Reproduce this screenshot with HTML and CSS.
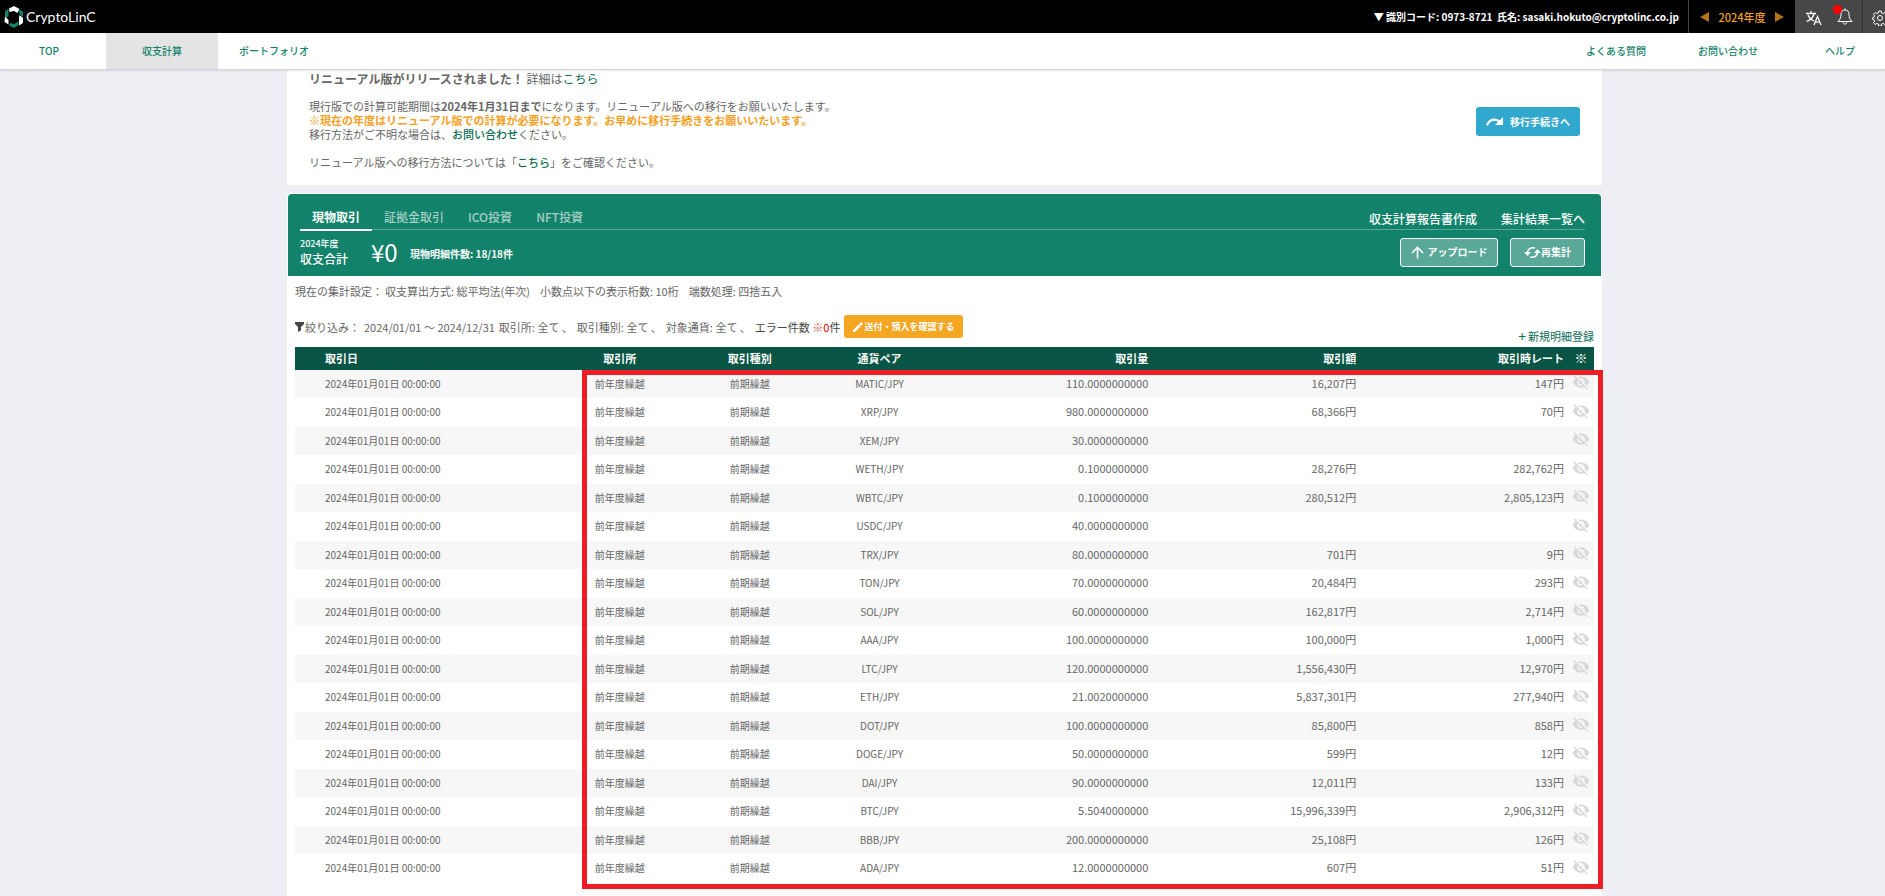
FILE: index.html
```html
<!DOCTYPE html>
<html lang="ja">
<head>
  <meta charset="UTF-8">
  <title>CryptoLinC 収支計算</title>
  <meta name="viewport" content="width=device-width, initial-scale=1">
  <link rel="stylesheet" href="styles.css">
</head>
<body>
  <svg class="defs" width="0" height="0">
    <symbol id="eye-off" viewBox="0 0 24 24"><path d="M12 7c2.76 0 5 2.24 5 5 0 .65-.13 1.26-.36 1.83l2.92 2.92c1.51-1.26 2.7-2.89 3.43-4.75-1.73-4.39-6-7.5-11-7.5-1.4 0-2.74.25-3.98.7l2.16 2.16C10.74 7.13 11.35 7 12 7zM2 4.27l2.28 2.28.46.46C3.08 8.3 1.78 10.02 1 12c1.73 4.39 6 7.5 11 7.5 1.55 0 3.03-.3 4.38-.84l.42.42L19.73 22 21 20.73 3.27 3 2 4.27zM7.53 9.8l1.55 1.55c-.05.21-.08.43-.08.65 0 1.66 1.34 3 3 3 .22 0 .44-.03.65-.08l1.55 1.55c-.67.33-1.41.53-2.2.53-2.76 0-5-2.24-5-5 0-.79.2-1.53.53-2.2zm4.31-.78l3.15 3.15.02-.16c0-1.66-1.34-3-3-3l-.17.01z"/></symbol>
  </svg>

  <header class="topbar">
    <a class="logo" href="#">
      <svg width="20" height="22" viewBox="0 0 20 22">
        <path fill="#fff" d="M5 2.500L10 0l5.500 3-2 4L10 5 5.500 6z"/>
        <path fill="#12836a" d="M4.500 3v7L1 13V5z"/>
        <path fill="#fff" d="M1 10.500l3.500 3.500v4.500L.5 16z"/>
        <path fill="#12836a" d="M6 17l4 1 4.500-2.500V19L10 22l-5-2.500z"/>
        <path fill="#fff" d="M15.500 9L19 12v5l-4 2.500V12z"/>
        <path fill="#12836a" d="M14.500 3.500L19 5.500V11l-3.500-3z"/>
      </svg>
      <span>CryptoLinC</span>
    </a>
    <div class="topbar-right">
      <button class="user">▼ 識別コード: 0973-8721&nbsp; 氏名: sasaki.hokuto@cryptolinc.co.jp</button>
      <div class="year">
        <button class="prev" aria-label="前年度"></button>
        <span>2024年度</span>
        <button class="next" aria-label="次年度"></button>
      </div>
      <div class="tools">
        <button class="tool" aria-label="言語">
          <svg width="16" height="16" viewBox="0 0 16 16" fill="none" stroke="#fff" stroke-width="1.300"><path d="M0 3.500h10M5 1v2.500M2 5c1 3 4 5 6 6M8 4c-1 4-4 6-7.500 7.500M8 15l3.500-8.500L15 15M9.300 12.200h4.500"/></svg>
        </button>
        <button class="tool bell" aria-label="お知らせ">
          <svg width="16" height="17" viewBox="0 0 16 17" fill="none" stroke="#fff" stroke-width="1"><path d="M8 .5v1.500M8 2C5 2 4 4 4 6.500c0 3-.7 4.500-3 7h14c-2.300-2.500-3-4-3-7C12 4 11 2 8 2zM6 13.500c0 3.500 4 3.500 4 0"/></svg>
          <span class="badge"></span>
        </button>
        <button class="tool gear" aria-label="設定">
          <svg width="16" height="16" viewBox="0 0 16 16" fill="none" stroke="#fff" stroke-width="1"><circle cx="8" cy="8" r="2.500"/><path d="M6.800 1h2.400l.4 2 1.500.6 1.700-1.100 1.700 1.700-1.100 1.700.6 1.400 1.500.5v1.400l-1.600.5-.5 1.500 1.100 1.700-1.700 1.600-1.700-1.100-1.500.6-.4 2H6.800l-.4-2-1.500-.6-1.700 1.100-1.700-1.600 1.100-1.700L2 9.700.5 9.200V7.800L2 7.300l.6-1.400-1.100-1.700 1.700-1.700 1.700 1.100 1.500-.6z"/></svg>
        </button>
      </div>
    </div>
  </header>

  <nav class="nav">
    <a class="top" href="#">TOP</a>
    <a class="active" href="#">収支計算</a>
    <a href="#">ポートフォリオ</a>
    <span class="spacer"></span>
    <a href="#">よくある質問</a>
    <a href="#">お問い合わせ</a>
    <a class="help" href="#">ヘルプ</a>
  </nav>

  <main class="main">
    <section class="notice">
      <div class="notice-text">
        <h2><b>リニューアル版がリリースされました！</b> 詳細は<a href="#">こちら</a></h2>
        <p>現行版での計算可能期間は<b>2024年1月31日まで</b>になります。リニューアル版への移行をお願いいたします。<br>
        <strong>※現在の年度はリニューアル版での計算が必要になります。お早めに移行手続きをお願いいたいます。</strong><br>
        移行方法がご不明な場合は、<a href="#">お問い合わせ</a>ください。</p>
        <p>リニューアル版への移行方法については「<a href="#">こちら</a>」をご確認ください。</p>
      </div>
      <button class="btn btn-blue">
        <svg width="18" height="10" viewBox="0 0 18 10"><path fill="none" stroke="#fff" stroke-width="2.200" d="M1 8.500C3 2 10 1 14 5"/><path fill="#fff" d="M17 0v8H9z"/></svg>
        移行手続きへ
      </button>
    </section>

    <section class="panel">
      <div class="summary">
        <div class="tabs">
          <a class="tab current" href="#">現物取引</a>
          <a class="tab" href="#">証拠金取引</a>
          <a class="tab" href="#">ICO投資</a>
          <a class="tab" href="#">NFT投資</a>
          <span class="spacer"></span>
          <a class="report" href="#">収支計算報告書作成</a>
          <a class="report" href="#">集計結果一覧へ</a>
        </div>
        <div class="totals">
          <div class="total-label"><small>2024年度</small>収支合計</div>
          <div class="total-value">¥0</div>
          <div class="total-count">現物明細件数: 18/18件</div>
          <span class="spacer"></span>
          <button class="btn btn-light upload">
            <svg width="13" height="13" viewBox="0 0 13 13" fill="none" stroke="#fff" stroke-width="1.600"><path d="M6.500 12.500V1.500M1 7l5.500-5.500L12 7"/></svg>
            アップロード
          </button>
          <button class="btn btn-light recalc">
            <svg width="17" height="13" viewBox="0 0 17 13"><path fill="none" stroke="#fff" stroke-width="1.700" d="M3.500 7C3.500 3 7 1 11 2M13.500 6c0 4-3.500 6-7.500 5"/><path fill="#fff" d="M0 6h7l-3.500 4zM10 7h7l-3.500-4z"/></svg>
            再集計
          </button>
        </div>
      </div>

      <div class="content">
        <div class="settings">
          <span>現在の集計設定：</span>
          <span>収支算出方式: 総平均法(年次)</span>
          <span>小数点以下の表示桁数: 10桁</span>
          <span>端数処理: 四捨五入</span>
        </div>
        <div class="filter">
          <svg width="9" height="10" viewBox="0 0 9 10"><path fill="#444" d="M0 0h9v2L6 5v3.500L3 10V5L0 2z"/></svg>
          <div class="conditions">
            <span>絞り込み：</span>
            <span>2024/01/01 ～ 2024/12/31</span>
            <span>取引所: 全て 、</span>
            <span>取引種別: 全て 、</span>
            <span>対象通貨: 全て 、</span>
            <span class="dark">エラー件数 <i>※</i><em>0</em>件</span>
          </div>
          <button class="btn btn-orange">
            <svg width="10" height="10" viewBox="0 0 10 10"><path fill="#fff" d="M0 8v2h2l5.800-5.800-2-2zM8.300 3.700L9.700 2.300c.3-.3.3-.6 0-.9L8.600.3c-.3-.3-.6-.3-.9 0L6.300 1.700z"/></svg>
            送付・預入を確認する
          </button>
          <span class="spacer"></span>
          <a class="add" href="#"><span>+</span>新規明細登録</a>
        </div>

        <div class="table-wrap">
          <table>
            <thead>
              <tr><th class="date">取引日</th><th class="mid">取引所</th><th class="mid">取引種別</th><th class="mid">通貨ペア</th><th class="num">取引量</th><th class="num">取引額</th><th class="num">取引時レート</th><th class="mark">※</th></tr>
            </thead>
            <tbody>
              <tr><td class="date">2024年01月01日 00:00:00</td><td>前年度繰越</td><td>前期繰越</td><td>MATIC/JPY</td><td class="num">110.0000000000</td><td class="num">16,207円</td><td class="num">147円</td><td><button class="eye" aria-label="非表示"><svg><use href="#eye-off"/></svg></button></td></tr>
              <tr><td class="date">2024年01月01日 00:00:00</td><td>前年度繰越</td><td>前期繰越</td><td>XRP/JPY</td><td class="num">980.0000000000</td><td class="num">68,366円</td><td class="num">70円</td><td><button class="eye" aria-label="非表示"><svg><use href="#eye-off"/></svg></button></td></tr>
              <tr><td class="date">2024年01月01日 00:00:00</td><td>前年度繰越</td><td>前期繰越</td><td>XEM/JPY</td><td class="num">30.0000000000</td><td class="num"></td><td class="num"></td><td><button class="eye" aria-label="非表示"><svg><use href="#eye-off"/></svg></button></td></tr>
              <tr><td class="date">2024年01月01日 00:00:00</td><td>前年度繰越</td><td>前期繰越</td><td>WETH/JPY</td><td class="num">0.1000000000</td><td class="num">28,276円</td><td class="num">282,762円</td><td><button class="eye" aria-label="非表示"><svg><use href="#eye-off"/></svg></button></td></tr>
              <tr><td class="date">2024年01月01日 00:00:00</td><td>前年度繰越</td><td>前期繰越</td><td>WBTC/JPY</td><td class="num">0.1000000000</td><td class="num">280,512円</td><td class="num">2,805,123円</td><td><button class="eye" aria-label="非表示"><svg><use href="#eye-off"/></svg></button></td></tr>
              <tr><td class="date">2024年01月01日 00:00:00</td><td>前年度繰越</td><td>前期繰越</td><td>USDC/JPY</td><td class="num">40.0000000000</td><td class="num"></td><td class="num"></td><td><button class="eye" aria-label="非表示"><svg><use href="#eye-off"/></svg></button></td></tr>
              <tr><td class="date">2024年01月01日 00:00:00</td><td>前年度繰越</td><td>前期繰越</td><td>TRX/JPY</td><td class="num">80.0000000000</td><td class="num">701円</td><td class="num">9円</td><td><button class="eye" aria-label="非表示"><svg><use href="#eye-off"/></svg></button></td></tr>
              <tr><td class="date">2024年01月01日 00:00:00</td><td>前年度繰越</td><td>前期繰越</td><td>TON/JPY</td><td class="num">70.0000000000</td><td class="num">20,484円</td><td class="num">293円</td><td><button class="eye" aria-label="非表示"><svg><use href="#eye-off"/></svg></button></td></tr>
              <tr><td class="date">2024年01月01日 00:00:00</td><td>前年度繰越</td><td>前期繰越</td><td>SOL/JPY</td><td class="num">60.0000000000</td><td class="num">162,817円</td><td class="num">2,714円</td><td><button class="eye" aria-label="非表示"><svg><use href="#eye-off"/></svg></button></td></tr>
              <tr><td class="date">2024年01月01日 00:00:00</td><td>前年度繰越</td><td>前期繰越</td><td>AAA/JPY</td><td class="num">100.0000000000</td><td class="num">100,000円</td><td class="num">1,000円</td><td><button class="eye" aria-label="非表示"><svg><use href="#eye-off"/></svg></button></td></tr>
              <tr><td class="date">2024年01月01日 00:00:00</td><td>前年度繰越</td><td>前期繰越</td><td>LTC/JPY</td><td class="num">120.0000000000</td><td class="num">1,556,430円</td><td class="num">12,970円</td><td><button class="eye" aria-label="非表示"><svg><use href="#eye-off"/></svg></button></td></tr>
              <tr><td class="date">2024年01月01日 00:00:00</td><td>前年度繰越</td><td>前期繰越</td><td>ETH/JPY</td><td class="num">21.0020000000</td><td class="num">5,837,301円</td><td class="num">277,940円</td><td><button class="eye" aria-label="非表示"><svg><use href="#eye-off"/></svg></button></td></tr>
              <tr><td class="date">2024年01月01日 00:00:00</td><td>前年度繰越</td><td>前期繰越</td><td>DOT/JPY</td><td class="num">100.0000000000</td><td class="num">85,800円</td><td class="num">858円</td><td><button class="eye" aria-label="非表示"><svg><use href="#eye-off"/></svg></button></td></tr>
              <tr><td class="date">2024年01月01日 00:00:00</td><td>前年度繰越</td><td>前期繰越</td><td>DOGE/JPY</td><td class="num">50.0000000000</td><td class="num">599円</td><td class="num">12円</td><td><button class="eye" aria-label="非表示"><svg><use href="#eye-off"/></svg></button></td></tr>
              <tr><td class="date">2024年01月01日 00:00:00</td><td>前年度繰越</td><td>前期繰越</td><td>DAI/JPY</td><td class="num">90.0000000000</td><td class="num">12,011円</td><td class="num">133円</td><td><button class="eye" aria-label="非表示"><svg><use href="#eye-off"/></svg></button></td></tr>
              <tr><td class="date">2024年01月01日 00:00:00</td><td>前年度繰越</td><td>前期繰越</td><td>BTC/JPY</td><td class="num">5.5040000000</td><td class="num">15,996,339円</td><td class="num">2,906,312円</td><td><button class="eye" aria-label="非表示"><svg><use href="#eye-off"/></svg></button></td></tr>
              <tr><td class="date">2024年01月01日 00:00:00</td><td>前年度繰越</td><td>前期繰越</td><td>BBB/JPY</td><td class="num">200.0000000000</td><td class="num">25,108円</td><td class="num">126円</td><td><button class="eye" aria-label="非表示"><svg><use href="#eye-off"/></svg></button></td></tr>
              <tr><td class="date">2024年01月01日 00:00:00</td><td>前年度繰越</td><td>前期繰越</td><td>ADA/JPY</td><td class="num">12.0000000000</td><td class="num">607円</td><td class="num">51円</td><td><button class="eye" aria-label="非表示"><svg><use href="#eye-off"/></svg></button></td></tr>
            </tbody>
          </table>
          <div class="highlight"></div>
        </div>
      </div>
    </section>
  </main>
</body>
</html>
```

FILE: styles.css
```css
* { box-sizing: border-box; }
body {
  margin: 0;
  background: #eeeff4;
  color: #666;
  font-family: "Noto Sans CJK JP", sans-serif;
  font-size: 11px;
  line-height: 14px;
  overflow-x: hidden;
}
a { color: #0b6b55; text-decoration: none; }
button {
  font: inherit;
  color: inherit;
  background: none;
  border: none;
  padding: 0;
  cursor: pointer;
}
h2, p { margin: 0; }
svg { display: block; flex: none; }
.defs { position: absolute; }
.spacer { flex: 1; }

/* top bar */
.topbar {
  display: flex;
  justify-content: space-between;
  height: 33px;
  background: #000;
  color: #fff;
  overflow: hidden;
}
.logo {
  display: flex;
  align-items: center;
  gap: 2px;
  padding-left: 4px;
  color: #fff;
  font-family: Lato, sans-serif;
  font-size: 14px;
}
.topbar-right { display: flex; font-weight: 500; }
.user { padding-right: 9px; font-size: 10px; font-weight: 700; }
.year {
  display: flex;
  align-items: center;
  justify-content: space-between;
  width: 107px;
  padding: 0 11px;
  border-left: 1px solid #444;
  color: #f5a01f;
}
.prev, .next {
  border-top: 5px solid transparent;
  border-bottom: 5px solid transparent;
}
.prev { border-right: 9px solid #b3741a; }
.next { border-left: 9px solid #b3741a; }
.tools {
  display: flex;
  width: 90px;
  background: #474747;
}
.tool {
  position: relative;
  flex: none;
  width: 34px;
  padding: 3px 0 0 11px;
}
.bell { padding: 0 0 0 8px; width: 33px; }
.gear { border-left: 1px solid #333; padding: 2px 0 0 9px; }
.badge {
  position: absolute;
  top: 5px;
  left: 4px;
  width: 9px;
  height: 9px;
  border-radius: 50%;
  background: #f00;
}

.nav {
  display: flex;
  height: 37px;
  background: #fff;
  border-bottom: 1px solid #d4d5d9;
  box-shadow: 0 1px 2px rgba(0,0,0,0.1);
  position: relative;
}
.nav a {
  display: flex;
  align-items: center;
  justify-content: center;
  width: 112px;
  color: #12836a;
  font-size: 10px;
  font-weight: 500;
}
.nav .top { width: 106px; padding-right: 8px; }
.nav .active { background: #e4e4e4; }
.nav .help { width: 101px; padding-left: 11px; }

.main {
  width: 70%;
  max-width: 1319px;
  margin: 0 auto;
  padding-left: 4px;
}

/* notice */
.notice {
  display: flex;
  justify-content: space-between;
  align-items: flex-start;
  padding: 1px 22px 16px;
  background: #fff;
}
.notice h2 {
  margin-bottom: 12px;
  font-size: 12px;
  line-height: 16px;
  font-weight: 400;
}
.notice p { margin-bottom: 14px; }
.notice p:last-child { margin-bottom: 0; }
.notice strong { color: #f5a01f; }
.notice p a { font-weight: 500; }

.btn {
  display: flex;
  align-items: center;
  justify-content: center;
  height: 29px;
  border-radius: 3px;
  color: #fff;
  font-weight: 700;
  white-space: nowrap;
}
.btn-blue {
  width: 104px;
  margin-top: 36px;
  gap: 6px;
  background: #31a8ce;
  font-size: 10px;
}

/* summary */
.panel {
  margin-top: 8px;
  padding: 1px 1px 20px;
  background: #fff;
  border-radius: 5px 5px 0 0;
}
.summary {
  height: 82px;
  padding: 14px 16px 0 12px;
  background: #12836a;
  border-radius: 4px 4px 0 0;
  color: #fff;
}
.tabs {
  display: flex;
  height: 22px;
  border-bottom: 1px solid #5aa897;
  font-size: 12px;
  font-weight: 500;
}
.tab {
  height: 23px;
  padding: 2px 12px 0;
  color: #a4cfc4;
}
.current {
  color: #fff;
  font-weight: 700;
  border-bottom: 2px solid #fff;
}
.report { margin-left: 24px; padding-top: 4px; color: #fff; }
.totals { display: flex; align-items: center; padding-top: 7px; }
.total-label {
  width: 71px;
  font-size: 12px;
  font-weight: 500;
  line-height: 16px;
}
.total-label small { display: block; font-size: 9px; line-height: 14px; }
.total-value { width: 39px; font-size: 24px; line-height: 28px; }
.total-count { padding-top: 4px; font-size: 10px; font-weight: 700; }
.btn-light {
  border: 1px solid #fff;
  background: #5aa897;
  font-size: 10px;
}
.upload { width: 98px; gap: 4px; }
.recalc { width: 75px; margin-left: 12px; }

/* list */
.content { padding: 8px 7px 0; }
.settings { display: flex; gap: 10px; }
.settings span:first-child { margin-right: -8px; }
.filter {
  display: flex;
  align-items: center;
  height: 23px;
  margin: 17px 0 9px;
  white-space: nowrap;
}
.conditions { display: flex; gap: 4px; padding-left: 1px; }
.conditions .dark { color: #444; }
.filter i { color: #c55; font-style: normal; }
.filter em { color: #c00; font-style: normal; }
.btn-orange {
  width: 119px;
  height: 23px;
  margin-left: 4px;
  gap: 1px;
  background: #f5a623;
  font-size: 9px;
}
.add {
  display: flex;
  align-items: center;
  align-self: flex-end;
  gap: 2px;
  margin-bottom: -5px;
}
.add span { font-size: 14px; }

.table-wrap { position: relative; }
table {
  width: 100%;
  table-layout: fixed;
  border-collapse: collapse;
}
th, td { padding: 0 0 2px; text-align: center; }
th {
  height: 23px;
  background: #085545;
  color: #fff;
  font-weight: 700;
}
th.date { width: 20%; }
th.mid { width: 10%; }
th.num { width: 16%; }
th.mark { width: 2%; font-size: 13px; font-weight: 400; }
td { height: 28px; padding-bottom: 1px; font-size: 10px; }
tr:nth-child(even) td { height: 29px; }
tbody tr { background: #fff; }
tbody tr:nth-child(odd) { background: #f7f7f7; }
.date { padding-left: 30px; text-align: left; }
.num { padding-right: 4px; font-size: 11px; text-align: right; }
td.num { padding-bottom: 3px; }
.eye { display: block; margin: -3px auto 0; }
.eye svg { width: 18px; height: 18px; fill: #d8d8d8; }
.highlight {
  position: absolute;
  top: 23px;
  left: 287px;
  right: -9px;
  bottom: -6px;
  border: 5px solid #ee1c25;
  pointer-events: none;
}
```
